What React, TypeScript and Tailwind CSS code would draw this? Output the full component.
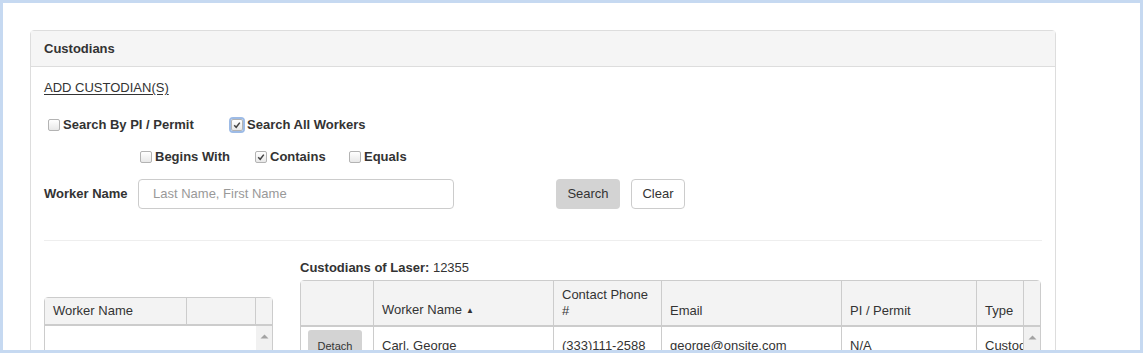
import React from 'react';

// Small native-looking checkbox
function Check({ checked, focus }: { checked?: boolean; focus?: boolean }) {
  return (
    <span
      className={`inline-flex h-[12px] w-[12px] items-center justify-center rounded-[2px] border border-[#b3b3b3] bg-gradient-to-b from-white to-[#e8e8e8] ${
        focus ? 'outline outline-2 outline-[#9dbbe6]' : ''
      }`}
    >
      {checked && (
        <svg width="8" height="8" viewBox="0 0 8 8">
          <path d="M1.2 4.3 L3.2 6.3 L6.8 1.6" fill="none" stroke="#444" strokeWidth="1.5" />
        </svg>
      )}
    </span>
  );
}

function ScrollUp() {
  return (
    <svg width="9" height="5" viewBox="0 0 9 5">
      <path d="M0.5 4.5 L4.5 0.5 L8.5 4.5 Z" fill="#a3a3a3" />
    </svg>
  );
}

const rightCols = [
  { label: '', w: 'w-[73px]' },
  { label: 'Worker Name', w: 'w-[180px]', sort: true },
  { label: 'Contact Phone #', w: 'w-[108px]' },
  { label: 'Email', w: 'w-[180px]' },
  { label: 'PI / Permit', w: 'w-[135px]' },
  { label: 'Type', w: 'w-[47px]' },
];

export default function App() {
  return (
    <div className="h-[353px] w-[1143px] overflow-hidden border-[3px] border-[#c6d9f1] bg-white font-['Liberation_Sans',Arial,sans-serif] text-[13px] text-[#333]">
      <div className="ml-[27px] mt-[27px] w-[1026px] rounded-[4px] border border-[#ddd]">
        <div className="flex h-[36px] items-center border-b border-[#ddd] bg-[#f5f5f5] px-[13px] font-bold">
          Custodians
        </div>

        <div className="px-[13px] pt-[13px]">
          <div className="h-[15px] leading-[15px] underline underline-offset-2">ADD CUSTODIAN(S)</div>

          <div className="mt-[22px] flex h-[15px] items-center font-bold leading-[15px]">
            <div className="flex w-[187px] items-center pl-[4px]">
              <Check />
              <span className="ml-[3px]">Search By PI / Permit</span>
            </div>
            <div className="flex items-center">
              <Check checked focus />
              <span className="ml-[4px]">Search All Workers</span>
            </div>
          </div>

          <div className="mt-[17px] flex h-[15px] items-center pl-[96px] font-bold leading-[15px]">
            <div className="flex w-[115px] items-center">
              <Check />
              <span className="ml-[3px]">Begins With</span>
            </div>
            <div className="flex w-[94px] items-center">
              <Check checked />
              <span className="ml-[3px]">Contains</span>
            </div>
            <div className="flex items-center">
              <Check />
              <span className="ml-[3px]">Equals</span>
            </div>
          </div>

          <div className="mt-[15px] flex h-[30px] items-center">
            <div className="w-[94px] font-bold">Worker Name</div>
            <div className="flex h-[30px] w-[316px] items-center rounded-[4px] border border-[#ccc] px-[14px] text-[#999]">
              Last Name, First Name
            </div>
            <button className="ml-[102px] h-[30px] w-[64px] rounded-[4px] bg-[#d3d3d3] text-[13px] text-[#333]">
              Search
            </button>
            <button className="ml-[11px] h-[30px] w-[54px] rounded-[4px] border border-[#ccc] bg-white text-[13px] text-[#333]">
              Clear
            </button>
          </div>

          <div className="mt-[31px] h-px bg-[#eee]" />

          <div className="flex gap-[27px]">
            {/* Left results grid */}
            <div className="mt-[56px] w-[229px] rounded-t-[4px] border border-[#ccc]">
              <div className="flex h-[28px] border-b-2 border-[#ccc] bg-[#f3f3f3]">
                <div className="flex w-[142px] items-center border-r border-[#ccc] px-[8px]">Worker Name</div>
                <div className="w-[69px] border-r border-[#ccc]" />
                <div className="flex-1" />
              </div>
              <div className="flex h-[40px]">
                <div className="w-[211px]" />
                <div className="flex flex-1 justify-center bg-[#f1f1f1] pt-[8px]">
                  <ScrollUp />
                </div>
              </div>
            </div>

            {/* Right custodians grid */}
            <div className="mt-[19px] flex-1">
              <div className="h-[15px] leading-[15px]">
                <span className="font-bold">Custodians of Laser:</span> 12355
              </div>
              <div className="mt-[5px] w-[741px] rounded-t-[4px] border border-[#ccc]">
                <div className="flex h-[46px] border-b-2 border-[#ccc] bg-[#f3f3f3]">
                  {rightCols.map((c, i) => (
                    <div
                      key={i}
                      className={`${c.w} flex items-end border-r border-[#ccc] px-[8px] pb-[6px] leading-[16px]`}
                    >
                      <span>
                        {c.label}
                        {c.sort && <span className="ml-[4px] align-[1px] text-[8px]">▲</span>}
                      </span>
                    </div>
                  ))}
                  <div className="flex-1" />
                </div>
                <div className="flex h-[40px]">
                  <div className="w-[73px] border-r border-[#ccc] px-[7px] pt-[3px]">
                    <button className="h-[30px] w-[54px] rounded-[3px] bg-[#d3d3d3] pt-[3px] text-[11px] text-[#333]">
                      Detach
                    </button>
                  </div>
                  <div className="w-[180px] border-r border-[#ccc] px-[8px] pt-[9px]">Carl, George</div>
                  <div className="w-[108px] border-r border-[#ccc] px-[8px] pt-[9px]">(333)111-2588</div>
                  <div className="w-[180px] border-r border-[#ccc] px-[8px] pt-[9px]">george@onsite.com</div>
                  <div className="w-[135px] border-r border-[#ccc] px-[8px] pt-[9px]">N/A</div>
                  <div className="w-[47px] overflow-hidden whitespace-nowrap border-r border-[#ccc] pl-[8px] pt-[9px]">
                    Custod
                  </div>
                  <div className="flex flex-1 justify-center bg-[#f1f1f1] pt-[8px]">
                    <ScrollUp />
                  </div>
                </div>
              </div>
            </div>
          </div>
        </div>
      </div>
    </div>
  );
}
